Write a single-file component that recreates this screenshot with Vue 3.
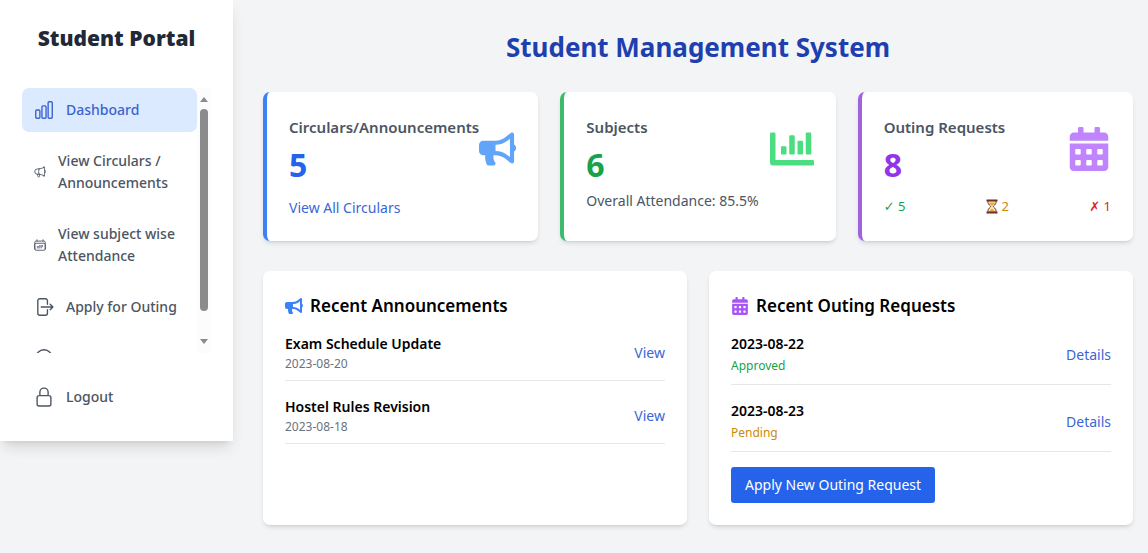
<script setup>
const navItems = [
  { label: 'Dashboard', icon: 'chart', size: 'lg', active: true },
  { label: 'View Circulars / Announcements', icon: 'megaphone', size: 'sm' },
  { label: 'View subject wise Attendance', icon: 'calendar', size: 'sm' },
  { label: 'Apply for Outing', icon: 'exit', size: 'lg' },
  { label: '', name: 'Information', icon: 'info', size: 'lg' },
]

const outlines = {
  chart:
    'M3 13.125C3 12.504 3.504 12 4.125 12h2.25c.621 0 1.125.504 1.125 1.125v6.75C7.5 20.496 6.996 21 6.375 21h-2.25A1.125 1.125 0 013 19.875v-6.75zM9.75 8.625c0-.621.504-1.125 1.125-1.125h2.25c.621 0 1.125.504 1.125 1.125v11.25c0 .621-.504 1.125-1.125 1.125h-2.25a1.125 1.125 0 01-1.125-1.125V8.625zM16.5 4.125c0-.621.504-1.125 1.125-1.125h2.25C20.496 3 21 3.504 21 4.125v15.75c0 .621-.504 1.125-1.125 1.125h-2.25a1.125 1.125 0 01-1.125-1.125V4.125z',
  megaphone:
    'M10.34 15.84c-.688-.06-1.386-.09-2.09-.09H7.5a4.5 4.5 0 110-9h.75c.704 0 1.402-.03 2.09-.09m0 9.18c.253.962.584 1.892.985 2.783.247.55.06 1.21-.463 1.511l-.657.38c-.551.318-1.26.117-1.527-.461a20.845 20.845 0 01-1.44-4.282m3.102.069a18.03 18.03 0 01-.59-4.59c0-1.586.205-3.124.59-4.59m0 9.18a23.848 23.848 0 018.835 2.535M10.34 6.66a23.847 23.847 0 008.835-2.535m0 0A23.74 23.74 0 0018.795 3m.38 1.125a23.91 23.91 0 011.014 5.395m-1.014 8.855c-.118.38-.245.754-.38 1.125m.38-1.125a23.91 23.91 0 001.014-5.395m0-3.46c.495.413.811 1.035.811 1.73 0 .695-.316 1.317-.811 1.73m0-3.46a24.347 24.347 0 010 3.46',
  calendar:
    'M6.75 3v2.25M17.25 3v2.25M3 18.75V7.5a2.25 2.25 0 012.25-2.25h13.5A2.25 2.25 0 0121 7.5v11.25m-18 0A2.25 2.25 0 005.25 21h13.5A2.25 2.25 0 0021 18.75m-18 0v-7.5A2.25 2.25 0 015.25 9h13.5A2.25 2.25 0 0121 11.25v7.5m-9-6h.008v.008H12v-.008zM12 15h.008v.008H12V15zm0 2.25h.008v.008H12v-.008zM9.75 15h.008v.008H9.75V15zm0 2.25h.008v.008H9.75v-.008zM7.5 15h.008v.008H7.5V15zm0 2.25h.008v.008H7.5v-.008zm6.75-4.5h.008v.008h-.008v-.008zm0 2.25h.008v.008h-.008V15zm0 2.25h.008v.008h-.008v-.008zm2.25-4.5h.008v.008H16.5v-.008zm0 2.25h.008v.008H16.5V15z',
  exit:
    'M15.75 9V5.25A2.25 2.25 0 0013.5 3h-6a2.25 2.25 0 00-2.25 2.25v13.5A2.25 2.25 0 007.5 21h6a2.25 2.25 0 002.25-2.25V15m3 0l3-3m0 0l-3-3m3 3H9',
  info:
    'M11.25 11.25l.041-.02a.75.75 0 011.063.852l-.708 2.836a.75.75 0 001.063.853l.041-.021M21 12a9 9 0 11-18 0 9 9 0 0118 0z',
  lock:
    'M16.5 10.5V6.75a4.5 4.5 0 10-9 0v3.75m-.75 11.25h10.5a2.25 2.25 0 002.25-2.25v-6.75a2.25 2.25 0 00-2.25-2.25H6.75a2.25 2.25 0 00-2.25 2.25v6.75a2.25 2.25 0 002.25 2.25z',
}

const solids = {
  bullhorn: {
    box: '0 0 576 512',
    d: 'M576 240c0-23.63-12.95-44.04-32-55.12V32.01C544 23.26 537.02 0 512 0c-7.12 0-14.19 2.38-19.98 7.02l-85.03 68.03C364.28 109.19 310.66 128 256 128H64c-35.35 0-64 28.65-64 64v96c0 35.35 28.65 64 64 64h33.7c-1.39 10.48-2.18 21.14-2.18 32 0 39.77 9.26 77.35 25.56 110.94 5.19 10.69 16.52 17.06 28.4 17.06h74.28c26.05 0 41.69-29.84 25.9-50.56-16.4-21.52-26.15-48.36-26.15-77.44 0-11.11 1.62-21.79 4.41-32H256c54.66 0 108.28 18.81 150.98 52.95l85.03 68.03a32.023 32.023 0 0 0 19.98 7.02c24.92 0 32-22.78 32-32V295.13C563.05 284.04 576 263.63 576 240zm-96 141.42l-33.05-26.44C392.95 311.78 325.12 288 256 288v-96c69.12 0 136.95-23.78 190.95-66.98L480 98.58v282.84z',
  },
  bars: {
    box: '0 0 512 512',
    d: 'M332.8 320h38.4c6.4 0 12.8-6.4 12.8-12.8V172.8c0-6.4-6.4-12.8-12.8-12.8h-38.4c-6.4 0-12.8 6.4-12.8 12.8v134.4c0 6.4 6.4 12.8 12.8 12.8zm96 0h38.4c6.4 0 12.8-6.4 12.8-12.8V76.8c0-6.4-6.4-12.8-12.8-12.8h-38.4c-6.4 0-12.8 6.4-12.8 12.8v230.4c0 6.4 6.4 12.8 12.8 12.8zm-288 0h38.4c6.4 0 12.8-6.4 12.8-12.8v-70.4c0-6.4-6.4-12.8-12.8-12.8h-38.4c-6.4 0-12.8 6.4-12.8 12.8v70.4c0 6.4 6.4 12.8 12.8 12.8zm96 0h38.4c6.4 0 12.8-6.4 12.8-12.8V108.8c0-6.4-6.4-12.8-12.8-12.8h-38.4c-6.4 0-12.8 6.4-12.8 12.8v198.4c0 6.4 6.4 12.8 12.8 12.8zM496 384H64V80c0-8.84-7.16-16-16-16H16C7.16 64 0 71.16 0 80v336c0 17.67 14.33 32 32 32h464c8.84 0 16-7.16 16-16v-32c0-8.84-7.16-16-16-16z',
  },
  calendar: {
    box: '0 0 448 512',
    d: 'M0 464c0 26.5 21.5 48 48 48h352c26.5 0 48-21.5 48-48V192H0v272zm320-196c0-6.6 5.4-12 12-12h40c6.6 0 12 5.4 12 12v40c0 6.6-5.4 12-12 12h-40c-6.6 0-12-5.4-12-12v-40zm0 128c0-6.6 5.4-12 12-12h40c6.6 0 12 5.4 12 12v40c0 6.6-5.4 12-12 12h-40c-6.6 0-12-5.4-12-12v-40zM192 268c0-6.6 5.4-12 12-12h40c6.6 0 12 5.4 12 12v40c0 6.6-5.4 12-12 12h-40c-6.6 0-12-5.4-12-12v-40zm0 128c0-6.6 5.4-12 12-12h40c6.6 0 12 5.4 12 12v40c0 6.6-5.4 12-12 12h-40c-6.6 0-12-5.4-12-12v-40zM64 268c0-6.6 5.4-12 12-12h40c6.6 0 12 5.4 12 12v40c0 6.6-5.4 12-12 12H76c-6.6 0-12-5.4-12-12v-40zm0 128c0-6.6 5.4-12 12-12h40c6.6 0 12 5.4 12 12v40c0 6.6-5.4 12-12 12H76c-6.6 0-12-5.4-12-12v-40zM400 64h-48V16c0-8.8-7.2-16-16-16h-32c-8.8 0-16 7.2-16 16v48H160V16c0-8.8-7.2-16-16-16h-32c-8.8 0-16 7.2-16 16v48H48C21.5 64 0 85.5 0 112v48h448v-48c0-26.5-21.5-48-48-48z',
  },
}

const stats = [
  { key: 'blue', title: 'Circulars/Announcements', value: 5, icon: solids.bullhorn },
  { key: 'green', title: 'Subjects', value: 6, icon: solids.bars },
  { key: 'purple', title: 'Outing Requests', value: 8, icon: solids.calendar },
]

const announcements = [
  { title: 'Exam Schedule Update', date: '2023-08-20' },
  { title: 'Hostel Rules Revision', date: '2023-08-18' },
]

const outings = [
  { date: '2023-08-22', status: 'Approved' },
  { date: '2023-08-23', status: 'Pending' },
]
</script>

<template>
  <div class="page">
    <aside class="sidebar">
      <h2 class="brand">Student Portal</h2>
      <div class="scroller">
        <nav class="nav">
          <a
            v-for="item in navItems"
            :key="item.icon"
            href="#"
            class="nav-item"
            :class="{ active: item.active }"
            :aria-label="item.name"
          >
            <svg class="outline" :class="item.size" viewBox="0 0 24 24" aria-hidden="true">
              <path :d="outlines[item.icon]" />
            </svg>
            <span>{{ item.label }}</span>
          </a>
        </nav>
        <div class="track" aria-hidden="true">
          <span class="arrow up"></span>
          <span class="thumb"></span>
          <span class="arrow down"></span>
        </div>
      </div>
      <button type="button" class="nav-item logout">
        <svg class="outline lg" viewBox="0 0 24 24" aria-hidden="true">
          <path :d="outlines.lock" />
        </svg>
        <span>Logout</span>
      </button>
    </aside>

    <main class="main">
      <h1 class="heading">Student Management System</h1>

      <section class="stats">
        <article v-for="s in stats" :key="s.key" class="card stat" :class="s.key">
          <div class="stat-top">
            <div>
              <h3 class="stat-title">{{ s.title }}</h3>
              <p class="stat-value">{{ s.value }}</p>
            </div>
            <svg class="stat-icon" :viewBox="s.icon.box" aria-hidden="true">
              <path :d="s.icon.d" />
            </svg>
          </div>
          <a v-if="s.key === 'blue'" href="#" class="link stat-link">View All Circulars</a>
          <p v-else-if="s.key === 'green'" class="attendance">Overall Attendance: 85.5%</p>
          <div v-else class="counts">
            <span class="ok">✓ 5</span>
            <span class="wait">
              <svg class="hourglass" viewBox="0 0 12 15" role="img" aria-label="Pending">
                <path d="M2 1.5h8v2.2c0 1.7-2.6 2.8-2.6 3.8S10 9.6 10 11.3v2.2H2v-2.2c0-1.7 2.6-2.8 2.6-3.8S2 5.4 2 3.7z" fill="#fde9c0" stroke="#5b3a2c" stroke-width="1" />
                <path d="M3 3.4h6c0 1.5-2.3 2.3-3 3.6-.7-1.3-3-2.1-3-3.6zM3 13c.1-1.9 2-2.3 3-3.6 1 1.3 2.9 1.7 3 3.6z" fill="#f2a93b" />
                <path d="M.5.5h11v2H.5zM.5 12.5h11v2H.5z" fill="#6b3324" />
              </svg>
              2
            </span>
            <span class="no">✗ 1</span>
          </div>
        </article>
      </section>

      <section class="panels">
        <article class="card panel">
          <h2 class="panel-title">
            <svg class="panel-icon blue-icon" :viewBox="solids.bullhorn.box" aria-hidden="true">
              <path :d="solids.bullhorn.d" />
            </svg>
            Recent Announcements
          </h2>
          <ul class="list">
            <li v-for="a in announcements" :key="a.title" class="row">
              <div>
                <h4 class="row-title">{{ a.title }}</h4>
                <p class="row-date">{{ a.date }}</p>
              </div>
              <a href="#" class="link">View</a>
            </li>
          </ul>
        </article>

        <article class="card panel">
          <h2 class="panel-title">
            <svg class="panel-icon purple-icon" :viewBox="solids.calendar.box" aria-hidden="true">
              <path :d="solids.calendar.d" />
            </svg>
            Recent Outing Requests
          </h2>
          <ul class="list">
            <li v-for="o in outings" :key="o.date" class="row">
              <div>
                <h4 class="row-title">{{ o.date }}</h4>
                <p class="row-status" :class="o.status.toLowerCase()">{{ o.status }}</p>
              </div>
              <a href="#" class="link">Details</a>
            </li>
          </ul>
          <button type="button" class="apply">Apply New Outing Request</button>
        </article>
      </section>
    </main>
  </div>
</template>

<style>
body {
  background: #f3f4f6;
}
</style>

<style scoped>
.page {
  display: flex;
  align-items: flex-start;
  min-height: 100vh;
  font-family: "Noto Sans", "Open Sans", "DejaVu Sans", sans-serif;
  font-size: 14px;
  line-height: 22px;
  color: #000;
}
.page * {
  box-sizing: border-box;
}
h1, h2, h3, h4, p, ul {
  margin: 0;
  padding: 0;
}
a {
  text-decoration: none;
}
button {
  font: inherit;
  border: 0;
  cursor: pointer;
}

.sidebar {
  flex: 0 0 233px;
  box-sizing: border-box;
  padding: 22px;
  background: #fff;
  box-shadow: 0 9px 14px -3px rgba(0, 0, 0, 0.12), 0 4px 6px -4px rgba(0, 0, 0, 0.12);
}
.brand {
  margin-bottom: 34px;
  font-size: 21px;
  line-height: 32px;
  font-weight: 900;
  text-align: center;
  white-space: nowrap;
  color: #1f2937;
}
.scroller {
  display: flex;
  max-height: 265px;
  overflow: hidden;
}
.nav {
  flex: 1;
  display: flex;
  flex-direction: column;
  gap: 7px;
}
.nav-item {
  display: flex;
  align-items: center;
  gap: 11px;
  flex-shrink: 0;
  padding: 11px;
  border-radius: 7px;
  font-weight: 500;
  text-align: left;
  color: #4b5563;
}
.nav-item.active {
  background: #dbeafe;
  color: #3b63cf;
}
.logout {
  width: 100%;
  margin-top: 22px;
  background: none;
}
.outline {
  flex-shrink: 0;
  height: 22px;
  fill: none;
  stroke: currentColor;
  stroke-width: 1.5;
  stroke-linecap: round;
  stroke-linejoin: round;
}
.outline.lg {
  width: 22px;
}
.outline.sm {
  width: 14px;
}
.track {
  flex: 0 0 14px;
  display: flex;
  flex-direction: column;
  align-items: center;
  height: 265px;
  padding: 9px 0;
  background: #fcfcfc;
}
.arrow {
  border: 4px solid transparent;
}
.arrow.up {
  border-top: 0;
  border-bottom: 5px solid #8b8b8b;
}
.arrow.down {
  margin-top: auto;
  border-bottom: 0;
  border-top: 5px solid #8b8b8b;
}
.thumb {
  width: 8px;
  height: 202px;
  margin-top: 7px;
  border-radius: 4px;
  background: #8b8b8b;
}

.main {
  flex: 1;
  min-width: 0;
  padding: 29px 15px 29px 30px;
}
.heading {
  margin-bottom: 26px;
  font-size: 26px;
  line-height: 37px;
  font-weight: 700;
  text-align: center;
  color: #1e40af;
}
.card {
  border-radius: 7px;
  background: #fff;
  box-shadow: 0 3px 5px -1px rgba(0, 0, 0, 0.12), 0 2px 3px -2px rgba(0, 0, 0, 0.12);
}
.stats {
  display: grid;
  grid-template-columns: repeat(3, minmax(0, 1fr));
  gap: 22px;
  margin-bottom: 30px;
}
.stat {
  padding: 22px;
  border-left: 4px solid;
}
.stat-top {
  display: flex;
  align-items: center;
  justify-content: space-between;
}
.stat-title {
  font-size: 15px;
  line-height: 26px;
  font-weight: 600;
  white-space: nowrap;
  color: #4b5563;
}
.stat-value {
  margin-top: 7px;
  font-size: 32px;
  line-height: 36px;
  font-weight: 700;
}
.stat-icon {
  width: 44px;
  min-width: 0;
  height: 44px;
  fill: currentColor;
}
.blue { border-color: #3b82f6; }
.green { border-color: #3dba6c; }
.purple { border-color: #a063e0; }
.blue .stat-value { color: #2563eb; }
.green .stat-value { color: #16a34a; }
.purple .stat-value { color: #9333ea; }
.blue .stat-icon { color: #60a5fa; }
.green .stat-icon { color: #4ade80; }
.purple .stat-icon { color: #c084fc; }
.link {
  color: #3b66d6;
}
.stat-link {
  display: block;
  margin-top: 14px;
}
.attendance {
  margin-top: 7px;
  color: #4b5563;
}
.counts {
  display: flex;
  justify-content: space-between;
  margin-top: 14px;
  font-size: 13px;
  line-height: 19px;
}
.ok { color: #16a34a; }
.wait {
  display: flex;
  align-items: center;
  gap: 4px;
  color: #ca8a04;
}
.no { color: #dc2626; }
.hourglass {
  width: 12px;
  height: 15px;
}

.panels {
  display: grid;
  grid-template-columns: repeat(2, minmax(0, 1fr));
  gap: 22px;
}
.panel {
  padding: 22px;
}
.panel-title {
  display: flex;
  align-items: center;
  gap: 7px;
  margin-bottom: 14px;
  font-size: 17px;
  line-height: 26px;
  font-weight: 600;
}
.panel-icon {
  width: 18px;
  height: 18px;
  fill: currentColor;
}
.blue-icon { color: #3b82f6; }
.purple-icon { color: #a855f7; }
.list {
  display: flex;
  flex-direction: column;
  gap: 15px;
  list-style: none;
}
.row {
  display: flex;
  align-items: center;
  justify-content: space-between;
  padding-bottom: 7px;
  border-bottom: 1px solid #e5e7eb;
}
.row-title {
  font-size: 14px;
  font-weight: 600;
}
.row-date {
  font-size: 12px;
  line-height: 18px;
  color: #6b7280;
}
.row-status {
  font-size: 12px;
}
.approved { color: #16a34a; }
.pending { color: #ca8a04; }
.apply {
  margin-top: 15px;
  padding: 7px 14px;
  border-radius: 3px;
  background: #2563eb;
  color: #fff;
}
</style>
